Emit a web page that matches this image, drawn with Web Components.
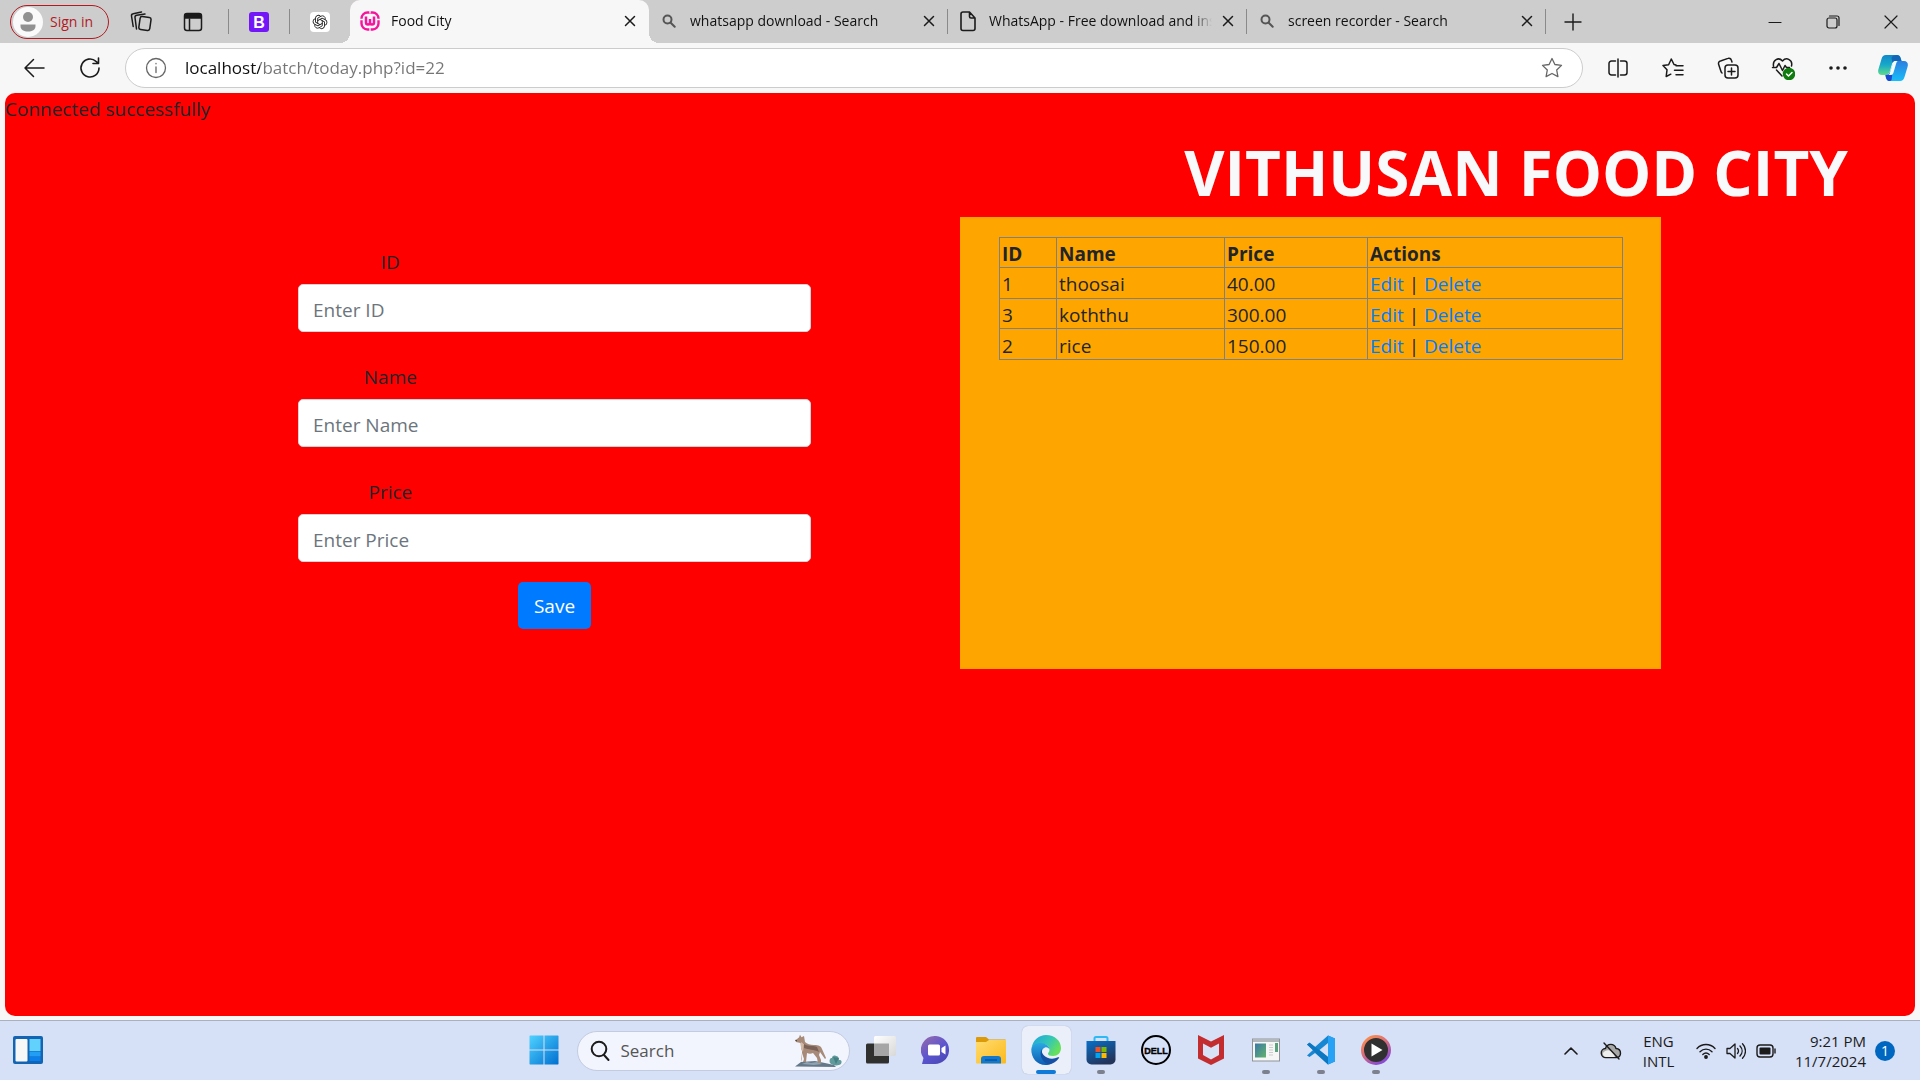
<!DOCTYPE html>
<html lang="en">
<head>
<meta charset="utf-8">
<title>Food City</title>
<style>
html,body{height:100%}
body{margin:0;display:flex;flex-direction:column;overflow:hidden;background:#f7f7f7;font-family:"Open Sans","Noto Sans",sans-serif;font-size:19px;line-height:30px;color:#212529}
food-page{flex:1;min-height:0}
</style>
</head>
<body>
<tab-strip>
  <browser-tab active icon="wamp" heading="Food City"></browser-tab>
  <browser-tab icon="glass" heading="whatsapp download - Search"></browser-tab>
  <browser-tab icon="file" heading="WhatsApp - Free download and install"></browser-tab>
  <browser-tab icon="glass" heading="screen recorder - Search"></browser-tab>
</tab-strip>
<nav-bar></nav-bar>
<food-page>
  <food-form slot="form">
    <form-field name="id" caption="ID"></form-field>
    <form-field name="name" caption="Name"></form-field>
    <form-field name="price" caption="Price"></form-field>
  </food-form>
  <food-table slot="list"></food-table>
</food-page>
<task-bar></task-bar>

<script>
const line = (w, h, box, body, sw = 1.5, color = '#1b1b1b') =>
  `<svg width="${w}" height="${h}" viewBox="${box}" fill="none" stroke="${color}" stroke-width="${sw}" stroke-linecap="round" stroke-linejoin="round" aria-hidden="true">${body}</svg>`;
const art = (w, h, box, body) => `<svg width="${w}" height="${h}" viewBox="${box}" aria-hidden="true">${body}</svg>`;

const ICONS = {
  person: art(30, 30, '0 0 30 30', '<circle cx="15" cy="15" r="15" fill="#fafafa"/><circle cx="15" cy="10" r="5" fill="#919191"/><path d="M7.500 17.500h15v1.500c0 4-3.500 5.500-7.500 5.500s-7.500-1.500-7.500-5.500z" fill="#919191"/>'),
  spaces: line(22, 22, '0 0 22 22', '<rect x="9.500" y="6" width="11" height="13" rx="2" transform="rotate(8 15 12)"/><path d="M6.500 18 5 6.500a2 2 0 0 1 1.700-2.200L15 3M3.200 15.500 1.500 5A2 2 0 0 1 3.200 2.800L11.500 1"/>'),
  panel: line(20, 20, '0 0 20 20', '<rect x="1.500" y="1.500" width="17" height="17" rx="2.500"/><path d="M6.500 7v11" /><path d="M2 2.500h16v3.500H2z" fill="#1b1b1b"/>'),
  bootstrap: art(20, 20, '0 0 20 20', '<rect width="20" height="20" rx="3" fill="#7317f8"/><text x="10" y="15.500" text-anchor="middle" font-family="Liberation Sans,sans-serif" font-weight="700" font-size="16" fill="#fff">B</text>'),
  knot: art(20, 20, '0 0 20 20', '<rect width="20" height="20" rx="4" fill="#fff"/><g fill="none" stroke="#222" stroke-width=".9" stroke-linejoin="round" stroke-linecap="round">' + [0,60,120,180,240,300].map(a => `<path transform="rotate(${a} 10 10)" d="M7.700 11.300V6.200L11 4.200a2.900 2.900 0 0 1 4.300 3"/>`).join('') + '</g>'),
  wamp: art(20, 20, '0 0 20 20', '<rect x="1.500" y="1.500" width="17" height="17" rx="6" fill="none" stroke="#f7149c" stroke-width="2.400"/><path d="M6 5.500v6a2 2 0 0 0 4 0V8v3.500a2 2 0 0 0 4 0v-6" fill="none" stroke="#f7149c" stroke-width="2.500"/><path d="M0 8.500h3M17 8.500h3M10 0v2.500M10 17v3" stroke="#f7f7f7" stroke-width="1.300"/>'),
  glass: line(14, 14, '0 0 14 14', '<circle cx="5.500" cy="5.500" r="4"/><path d="m8.700 8.700 4 4"/>', 2, '#555'),
  file: line(18, 22, '0 0 18 22', '<path d="M4 2h6.500L16 8v10.500a2 2 0 0 1-2 2H4a2 2 0 0 1-2-2V4a2 2 0 0 1 2-2zM10.500 2v4.500A1.500 1.500 0 0 0 12 8h4"/>', 1.6),
  close: line(12, 12, '0 0 12 12', '<path d="m1.500 1.500 9 9m0-9-9 9"/>', 1.5),
  plus: line(18, 18, '0 0 18 18', '<path d="M9 1v16M1 9h16"/>', 1.4),
  min: line(14, 14, '0 0 14 14', '<path d="M1 7.500h12"/>', 1.2),
  restore: line(14, 14, '0 0 14 14', '<rect x="1" y="3" width="10" height="10" rx="2"/><path d="M3.500 1H11a2 2 0 0 1 2 2v7.500"/>', 1.2),
  shut: line(14, 14, '0 0 14 14', '<path d="m1 1 12 12M13 1 1 13"/>', 1.2),
  back: line(22, 20, '0 0 22 20', '<path d="M21 10H2m8.500-8.500L2 10l8.500 8.500"/>'),
  reload: line(22, 22, '0 0 22 22', '<path d="M20 11a9 9 0 1 1-3-6.700L19 6M19.500 1v5.500H14"/>', 1.6),
  info: line(22, 22, '0 0 22 22', '<circle cx="11" cy="11" r="9.500"/><path d="M11 10v5.500M11 6.500v.3"/>', 1.3, '#666'),
  star: line(22, 22, '0 0 22 22', '<path d="m11 1.500 2.900 6 6.600.9-4.800 4.600 1.200 6.600L11 16.500l-5.900 3.100L6.300 13 1.500 8.400l6.600-.9z"/>', 1.3, '#666'),
  split: line(20, 20, '0 0 20 20', '<path d="M7.500 3h-4a2.500 2.500 0 0 0-2.500 2.500v9A2.500 2.500 0 0 0 3.500 17h4M12.500 3h4A2.500 2.500 0 0 1 19 5.500v9a2.500 2.500 0 0 1-2.500 2.500h-4M10 1v18"/>'),
  favs: line(22, 20, '0 0 22 20', '<path d="M14 7 12 6.500 9.300 1 6.600 6.700 1 7.600l4 4.200-.8 6.700 4.600-2.300M14 7.800h7M12.500 12.300H21M14 16.800h7"/>'),
  collect: line(22, 22, '0 0 22 22', '<rect x="8" y="8" width="13" height="13" rx="3"/><path d="M14.500 11v7M11 14.500h7M15 5l-.7-2A2.500 2.500 0 0 0 11 1.400L3.500 4A2.500 2.500 0 0 0 1.600 7.200L4 14.500a3 3 0 0 0 1 1.500"/>'),
  heart: line(24, 24, '0 0 24 24', '<path d="M2.500 10C1.500 4 7.500.5 11.500 5 15.500.5 22 4 20.500 10M5.500 14l5.500 6M1.500 11.500h4L8 7.500l3.500 7 2.500-5 1.500 2h3"/><circle cx="18" cy="18" r="5.500" fill="#107c10" stroke="#107c10"/><path d="m15.500 18 2 2 3.500-3.500" stroke="#fff"/>'),
  dots: art(20, 6, '0 0 20 6', '<g fill="#1b1b1b"><circle cx="3" cy="3" r="1.800"/><circle cx="10" cy="3" r="1.800"/><circle cx="17" cy="3" r="1.800"/></g>'),
  copilot: art(30, 28, '0 0 30 28', '<defs><linearGradient id="a" x2="0" y2="1"><stop stop-color="#1188c9"/><stop offset=".5" stop-color="#18a9c9"/><stop offset="1" stop-color="#5fdc8a"/></linearGradient><linearGradient id="b" x2="0" y2="1"><stop stop-color="#2c7ee0"/><stop offset="1" stop-color="#18bdf8"/></linearGradient></defs><path d="M8 1h11c3 0 3.500 2 4.500 6h-6c-2 0-3 1-3.500 3l-2 7c-.8 2.500-2 4-4.500 4H4c-3.500 0-4.500-3-3.500-6l3-10C4.200 2.500 5.500 1 8 1z" fill="url(#a)"/><path d="M19 1c2.500 0 3.500 2 4.500 6h-6c-2 0-2.500 1-3 2l-1-5c.5-2 2-3 5.500-3z" fill="#1267b8"/><path d="M22 27H12c-3 0-4-2-4.500-6 3 0 4-1 4.700-3.500L15 10c.8-2 1.500-3 4-3h7c3.500 0 4.500 3 3.500 6l-3 10c-.8 2.500-2 4-4.500 4z" fill="url(#b)"/><path d="M12 27c-3 0-4-2-4.500-6 3 0 4-1 4.700-3.500l2 4c-.6 2.500 0 5.500-2.200 5.500z" fill="#1a49d0"/><path d="m15 9-3 9.500c-.5 1.500-1 2.500-2 2.500h3c1.500 0 2-1 2.500-2.500L18 10c.4-1.500 1-3 2-3h-2c-2 0-2.400.6-3 2z" fill="#f2fbff"/>'),
  widgets: art(30, 28, '0 0 30 28', '<rect width="30" height="28" rx="2" fill="#1464b4"/><rect x="2.500" y="3" width="12" height="22.500" rx="1" fill="#f7f7f7"/><path d="M16.500 3h11v12h-11z" fill="#62d1fc"/><path d="M16.500 15.500h11v5h-11z" fill="#229ff5"/><path d="M16.500 21h11v4h-11z" fill="#0a80ee"/>'),
  start: art(30, 30, '0 0 30 30', '<defs><linearGradient id="s" x2="1" y2="1"><stop stop-color="#4fd2ff"/><stop offset="1" stop-color="#006fd0"/></linearGradient></defs><path d="M1 .5h13.500v14H.5V1zM15.500.5H29l.5.500v13.500h-14zM.5 15.500h14v14H1l-.5-.5zM15.500 15.500h14V29l-.5.500H15.500z" fill="url(#s)"/>'),
  find: line(20, 22, '0 0 20 22', '<circle cx="9" cy="9" r="7.300"/><path d="m14 15 4.500 5"/>', 2),
  wolf: art(50, 34, '0 0 50 34', '<path d="M2 32.500 8 28l14-1 10 2 9 2 2 2z" fill="#657889"/><path d="m9 30 5-2 4 1 6-1 5 2-8 1z" fill="#91a3b0"/><path d="M37 29c-1-3 0-5 2-5 0-2 2-3 4-2 2 0 3 2 3 4 3 0 3 2 2 4-2 2-9 2-11-1z" fill="#609a9a"/><path d="m40 23 3 7 3-6" fill="#437f83"/><path d="M2 6c2-.2 3-2 4-2.500L7 .8l1.500 2.400L11 2l1 6c2 2 5 3 9 3 5 0 7 1 8 4l4 9-1 1-5-7-1 3 2 5v3h-3l-1-5-4-5c-2 1-4 1-6 0l-1 9h-3l1-3-2-6-1 9H8l1-3V17c-1-2-1-5-1.500-8L3 8z" fill="#a78a78"/><path d="M10 9c3 4 10 2 14 4l2 5c-5-3-11-2-15-4z" fill="#7b6258"/><path d="m8 8 3 2-1 8-2-4z" fill="#d2b7a2"/><path d="M2 6.200 4 6l-.5 1.600z" fill="#443a36"/>'),
  tasks: art(30, 28, '0 0 30 28', '<defs><linearGradient id="t" x2="1" y2="1"><stop stop-color="#fff"/><stop offset="1" stop-color="#d8d8d8"/></linearGradient></defs><rect y="7.500" width="23" height="20" rx="1.500" fill="#30312f"/><rect x="8" width="22" height="20" rx="1.500" fill="url(#t)"/><path d="M8 7.500h15V20H8z" fill="#a5a6a5"/>'),
  chat: art(30, 30, '0 0 30 30', '<defs><linearGradient id="c" x2=".7" y2="1"><stop stop-color="#9a6ca9"/><stop offset=".6" stop-color="#5b55cf"/><stop offset="1" stop-color="#4d49b8"/></linearGradient></defs><path d="M15 1a14 14 0 1 1-2 28H1l1.500-6A14 14 0 0 1 15 1z" fill="url(#c)"/><rect x="7" y="9.500" width="12" height="11" rx="1.500" fill="#fff"/><path d="m20.500 13 4-2.500v9L20.500 17z" fill="#fff"/>'),
  folder: art(30, 28, '0 0 30 28', '<defs><linearGradient id="f" x2="1" y2="1"><stop stop-color="#ffdc70"/><stop offset="1" stop-color="#fcb91a"/></linearGradient></defs><path d="M0 2a1 1 0 0 1 1-1h9l3 2.500h16a1 1 0 0 1 1 1V8H0z" fill="#dc9a08"/><path d="M0 6h10l3-2h17v22.500a1 1 0 0 1-1 1H1a1 1 0 0 1-1-1z" fill="url(#f)"/><path d="M5 27.500V23a3 3 0 0 1 3-3h14a3 3 0 0 1 3 3v4.500z" fill="#1279cf"/><path d="M9 24h12" stroke="#074b94" stroke-width="1.200"/>'),
  edge: art(30, 30, '0 0 30 30', '<defs><linearGradient id="e" x2="1" y2=".5"><stop stop-color="#1ca4e2"/><stop offset=".6" stop-color="#35c7b5"/><stop offset="1" stop-color="#66e05b"/></linearGradient><linearGradient id="g" x2="0" y2="1"><stop stop-color="#2ba7e3"/><stop offset="1" stop-color="#0c5db4"/></linearGradient></defs><path d="M.5 13C2 5 8 0 15 0c9 0 15 6 15 13 0 5-3.500 8-8 8-3 0-5-1-5-2.300 0-1 1.500-1.500 1.500-4C18.500 11 15 9 11 9 6 9 2 11 .5 13z" fill="url(#e)"/><path d="M.3 14C1.500 10 5 8 9.500 8c5 0 9 3 9 6.500-1-2-3-2.500-4.500-2-4 1.500-4 7-1 11 2 3 5 4 8 4.500-2 1.500-4 2-6.500 2C6 30 0 23 .3 14z" fill="url(#g)"/><path d="M11 14c-3 4-1.500 12 6.500 15.500C22 29 26 26 28 23c.5-1 0-1-1-.7-5 2.500-11 1.500-14-1.800-2-2-2.500-4-2-6.500z" fill="#1450a3"/>'),
  store: art(30, 30, '0 0 30 30', '<defs><linearGradient id="st" x2=".5" y2="1"><stop stop-color="#0870c8"/><stop offset="1" stop-color="#23345b"/></linearGradient></defs><path d="M8.500 7V3.500a1.500 1.500 0 0 1 1.500-1.500h10a1.500 1.500 0 0 1 1.500 1.500V7" fill="none" stroke="#2eb9f4" stroke-width="2"/><path d="M.5 6h29v18.500a5 5 0 0 1-5 5h-19a5 5 0 0 1-5-5z" fill="url(#st)"/><path d="M9.500 12h5v5h-5z" fill="#f25022"/><path d="M15.500 12h5v5h-5z" fill="#7fba00"/><path d="M9.500 18h5v5h-5z" fill="#00a4ef"/><path d="M15.500 18h5v5h-5z" fill="#ffb900"/>'),
  dell: art(30, 30, '0 0 30 30', '<circle cx="15" cy="15" r="14" fill="none" stroke="#000" stroke-width="2"/><text x="15" y="18.500" text-anchor="middle" font-family="Liberation Sans,sans-serif" font-weight="700" font-size="9" fill="#000" stroke="#000" stroke-width=".4">DELL</text>'),
  mcafee: art(28, 30, '0 0 28 30', '<path d="M1 0l13 6.500L27 0v23.500L14 30 1 23.500z" fill="#c32d30"/><path d="m6 8.500 8 4.200 8-4.200V20l-8 4.500L6 20z" fill="#d8e2f7"/>'),
  gallery: art(28, 24, '0 0 28 24', '<defs><linearGradient id="y" x2="1" y2="1"><stop stop-color="#3b78a8"/><stop offset="1" stop-color="#62b36b"/></linearGradient></defs><rect x=".5" y="1" width="27" height="22" fill="#f6f6f6" stroke="#8f9499"/><path d="M1 1h26v3H1z" fill="#b3b8bd"/><path d="M3 5.500h11v14H3z" fill="url(#y)"/><path d="M17 7h4M17 9.500h4M17 12h4M17 14.500h4M17 17h4" stroke="#ccc"/><path d="M23 5h3v9h-3z" fill="#59a07d"/>'),
  code: art(30, 30, '0 0 30 30', '<path d="m22 .5 7 3v23l-7 3L9 18l-5.500 4L1 20.500l6-5.500-6-5.500L3.500 8 9 12zM22 8l-8.500 7L22 22z" fill="#1687d2" fill-rule="evenodd"/><path d="m22 .5 7 3v23l-7 3z" fill="#27a2f4"/><path d="m1 9.500 2.500-2L22 22v7.500z" fill="#0c78c1"/>'),
  player: art(30, 30, '0 0 30 30', '<defs><linearGradient id="p" x2=".6" y2="1"><stop stop-color="#ff9447"/><stop offset=".5" stop-color="#dc6d77"/><stop offset="1" stop-color="#8a4bd0"/></linearGradient></defs><circle cx="15" cy="15" r="13.500" fill="#303030" stroke="url(#p)" stroke-width="3"/><path d="M10.500 8.500v13l11-6.500z" fill="#fff"/>'),
  caret: line(14, 8, '0 0 14 8', '<path d="m1 7 6-6 6 6"/>', 1.6),
  cloud: line(22, 18, '0 0 22 18', '<path d="M6 15.500a4.500 4.500 0 0 1-.5-9C7 1 14.500 1 16 6.500c6 .5 6 9 0 9z" fill="#a8a8a8"/><path d="M3 11c3-4 9-4 12 4H6c-2 0-3.500-2-3-4z" fill="#eee" stroke="none"/><path d="m4 1 15 16"/>', 1.4),
  wifi: line(20, 16, '0 0 20 16', '<path d="M1 5.500C6 .2 14 .2 19 5.500M4 8.700c3.500-3.500 8.500-3.500 12 0M6.800 11.500c2-2 4.400-2 6.400 0"/><circle cx="10" cy="14" r="1.200" fill="#1b1b1b"/>', 1.4),
  sound: line(20, 18, '0 0 20 18', '<path d="M1 6.500h3L9 2v14l-5-4.500H1zM11.500 6.500c1.200 1.500 1.200 3.500 0 5M14 4c2.800 3 2.800 7 0 10M16.500 1.800c4 4.200 4 10.200 0 14.400"/>', 1.3),
  battery: line(20, 14, '0 0 20 14', '<rect x="1" y="1" width="16" height="12" rx="3"/><path d="M19 5v4"/><rect x="3.500" y="3.500" width="11" height="7" rx="1" fill="#1b1b1b" stroke="none"/>', 1.4)
};

const define = (name, html) => customElements.define(name, class extends HTMLElement {
  connectedCallback() {
    if (this.shadowRoot) return;
    const root = this.attachShadow({ mode: 'open' });
    root.innerHTML = typeof html === 'function' ? html(this) : html;
  }
});

const BOX = `*,:host{box-sizing:border-box}`;
const RESET = `${BOX}button{font:inherit;color:inherit;background:none;border:0;padding:0;margin:0;display:flex;align-items:center;justify-content:center;height:100%}`;

define('ui-icon', el => `<style>:host{display:inline-flex;align-items:center;justify-content:center;flex:none}svg{display:block}</style>${ICONS[el.getAttribute('name')]}`);

define('browser-tab', el => `<style>${RESET}
:host{display:block;position:relative;flex:0 1 299px;min-width:0;height:43px;font-size:14px;line-height:20px;color:#111}
:host([active]){background:#f7f7f7;border-radius:10px 10px 0 0}
:host([active])::before,:host([active])::after{content:"";position:absolute;bottom:0;width:10px;height:10px}
:host([active])::before{right:100%;background:radial-gradient(circle at 0 0,transparent 10px,#f7f7f7 10px)}
:host([active])::after{left:100%;background:radial-gradient(circle at 100% 0,transparent 10px,#f7f7f7 10px)}
.row{display:flex;align-items:center;height:100%;padding:0 9px 2px 10px}
:host(:not([active])) .row{background:linear-gradient(#8a8a8a,#8a8a8a) right 9px/1px 25px no-repeat}
.pick{flex:1;min-width:0;gap:11px;justify-content:flex-start}
.pick ui-icon{width:20px}
span{flex:1;overflow:hidden;white-space:nowrap;text-align:left;margin-right:6px;-webkit-mask:linear-gradient(90deg,#000 calc(100% - 20px),transparent);mask:linear-gradient(90deg,#000 calc(100% - 20px),transparent)}
.x{width:20px}
</style><div class="row"><button class="pick" role="tab"><ui-icon name="${el.getAttribute('icon')}"></ui-icon><span>${el.getAttribute('heading')}</span></button><button class="x" aria-label="Close tab"><ui-icon name="close"></ui-icon></button></div>`);

define('tab-strip', `<style>${RESET}
:host{display:flex;align-items:center;height:43px;flex:none;background:#cdcdcd;padding-left:10px;font-size:14px;line-height:20px}
.user{height:34px;width:99px;flex:none;border:1px solid #b3191f;border-radius:17px;color:#b3191f;gap:7px;justify-content:flex-start;padding-left:2px;margin-right:6px}
.tool{width:52px;flex:none}
.pins{display:flex;margin-left:9px;height:25px;flex:none}
.pins button{width:61px;border-left:1px solid #8a8a8a}
.tabs{display:flex;flex:1;min-width:0;height:43px}
.new{width:54px}
.win{width:58px;flex:none}
</style>
<button class="user"><ui-icon name="person"></ui-icon>Sign in</button>
<button class="tool" aria-label="Workspaces"><ui-icon name="spaces"></ui-icon></button>
<button class="tool" aria-label="Tab actions"><ui-icon name="panel"></ui-icon></button>
<div class="pins"><button aria-label="Bootstrap"><ui-icon name="bootstrap"></ui-icon></button><button aria-label="ChatGPT"><ui-icon name="knot"></ui-icon></button></div>
<div class="tabs" role="tablist"><slot></slot><button class="new" aria-label="New tab"><ui-icon name="plus"></ui-icon></button></div>
<button class="win" aria-label="Minimize"><ui-icon name="min"></ui-icon></button>
<button class="win" aria-label="Restore"><ui-icon name="restore"></ui-icon></button>
<button class="win" aria-label="Close"><ui-icon name="shut"></ui-icon></button>`);

define('nav-bar', `<style>${RESET}
:host{display:flex;align-items:center;height:50px;flex:none;background:#f7f7f7;padding-left:6px}
button{width:56px;flex:none}
.box{flex:1;display:flex;align-items:center;height:40px;margin:0 7px;padding:0 19px;border:1px solid #ccc;border-radius:20px;background:#fff}
.box button{width:22px}
input{flex:1;min-width:0;margin:0 18px;padding:0;border:0;outline:0;font:17px/24px "Open Sans","Noto Sans",sans-serif;-webkit-text-fill-color:transparent;background:linear-gradient(90deg,#111 75px,#757575 75px);-webkit-background-clip:text;background-clip:text}
.side{width:55px}
</style>
<button aria-label="Back"><ui-icon name="back"></ui-icon></button>
<button aria-label="Refresh"><ui-icon name="reload"></ui-icon></button>
<div class="box"><button aria-label="Site information"><ui-icon name="info"></ui-icon></button><input aria-label="Address" value="localhost/batch/today.php?id=22" spellcheck="false"><button aria-label="Add to favorites"><ui-icon name="star"></ui-icon></button></div>
<button class="side" aria-label="Split screen"><ui-icon name="split"></ui-icon></button>
<button class="side" aria-label="Favorites"><ui-icon name="favs"></ui-icon></button>
<button class="side" aria-label="Collections"><ui-icon name="collect"></ui-icon></button>
<button class="side" aria-label="Browser essentials"><ui-icon name="heart"></ui-icon></button>
<button class="side" aria-label="Settings"><ui-icon name="dots"></ui-icon></button>
<button class="side" aria-label="Copilot"><ui-icon name="copilot"></ui-icon></button>`);

define('food-page', `<style>${BOX}
:host{display:block;margin:0 5px 4px;background:red;border-radius:10px;overflow:hidden}
p{margin:0;padding-top:1px}
h1{margin:10px 0 7px;padding-right:67px;text-align:right;font-size:62px;line-height:76px;font-weight:700;color:#f8f9fa}
main{display:grid;grid-template-columns:1fr 1fr;align-items:start}
.form{padding:30px 149px 0 0;display:flex;justify-content:flex-end}
</style><p>Connected successfully</p><h1>VITHUSAN FOOD CITY</h1><main><div class="form"><slot name="form"></slot></div><slot name="list"></slot></main>`);

define('form-field', el => { const n = el.getAttribute('name'), c = el.getAttribute('caption'); return `<style>${BOX}
:host{display:block}
label{display:block;width:36%;margin-bottom:7px;text-align:center}
input{display:block;width:100%;height:48px;padding:4px 14px 0;border:1px solid #ced4da;border-radius:5px;background:#fff;font:inherit;color:#495057}
input::placeholder{color:#6c757d;opacity:1}
</style><label for="${n}">${c}</label><input id="${n}" name="${n}" placeholder="Enter ${c}">`; });

define('food-form', `<style>${BOX}
:host{display:block;flex:0 1 513px}
form{display:flex;flex-direction:column;align-items:center}
.fields{display:flex;flex-direction:column;gap:30px;width:100%}
button{height:47px;margin-top:20px;padding:0 16px;border:0;border-radius:5px;background:#007bff;color:#fff;font:inherit}
</style><form onsubmit="return false"><div class="fields"><slot></slot></div><button>Save</button></form>`);

define('food-table', () => { const rows = [['1', 'thoosai', '40.00'], ['3', 'koththu', '300.00'], ['2', 'rice', '150.00']]; return `<style>${BOX}
:host{display:block;width:73.4%;height:452px;background:orange;padding:20px 38px 20px 39px}
table{width:100%;height:123px;table-layout:fixed;border-collapse:collapse;line-height:26px}
th,td{border:1px solid #808080;padding:3px 1px 0 2px;text-align:left}
a{color:#007bff;text-decoration:none}
.i{width:57px}.n{width:168px}.p{width:143px}
</style><table><thead><tr><th class="i">ID</th><th class="n">Name</th><th class="p">Price</th><th>Actions</th></tr></thead><tbody>${rows.map(r => `<tr>${r.map(c => `<td>${c}</td>`).join('')}<td><a href="#edit">Edit</a> | <a href="#delete">Delete</a></td></tr>`).join('')}</tbody></table>`; });

define('task-app', el => `<style>${RESET}
:host{display:block;width:55px;height:100%}
button{position:relative;width:49px;height:48px;margin:5px 3px;border-radius:6px}
:host([current]) button{background:#ebeff9;box-shadow:0 0 1px #9aa4bd}
:host([current]) button::after,:host([running]) button::after{content:"";position:absolute;bottom:0;width:8px;height:4px;border-radius:2px;background:#7c818d}
:host([current]) button::after{width:20px;background:#0f7ad8}
</style><button aria-label="${el.getAttribute('name')}"><ui-icon name="${el.getAttribute('icon')}"></ui-icon></button>`);

define('task-bar', `<style>${RESET}
:host{display:grid;grid-template-columns:1fr auto 1fr;height:60px;flex:none;background:#d6e0f7;border-top:1px solid #a9b1c0;color:#1b1b1b;line-height:20px}
.apps,.tray{display:flex;align-items:center;height:100%}
.search{display:flex;align-items:center;width:273px;height:40px;margin:0 4px 0 5px;padding:0 6px 0 12px;border:1px solid #c2cbe0;border-radius:20px;background:#f2f5fd}
.search input{flex:1;min-width:0;margin-left:11px;padding:0;border:0;outline:0;background:none;font:17px/24px "Open Sans","Noto Sans",sans-serif}
.search input::placeholder{color:#555;opacity:1}
.tray{justify-content:flex-end;padding-right:25px;font-size:15px}
.tray button{width:40px}
.tray .lang{width:55px}
.status{display:flex;margin-left:5px;height:100%}
.tray .status button{width:30px}
.tray .clock{width:85px;text-align:right;justify-content:flex-end}
.tray .note{width:20px;height:20px;margin-left:9px;border-radius:10px;background:#0067c0;color:#fff;font-size:14px}
</style>
<div><task-app icon="widgets" name="Widgets"></task-app></div>
<div class="apps"><task-app icon="start" name="Start"></task-app>
<label class="search"><ui-icon name="find"></ui-icon><input placeholder="Search" aria-label="Search"><ui-icon name="wolf"></ui-icon></label>
<task-app icon="tasks" name="Task view"></task-app><task-app icon="chat" name="Chat"></task-app><task-app icon="folder" name="File Explorer"></task-app><task-app icon="edge" name="Edge" current></task-app><task-app icon="store" name="Store" running></task-app><task-app icon="dell" name="Dell"></task-app><task-app icon="mcafee" name="McAfee"></task-app><task-app icon="gallery" name="Gallery" running></task-app><task-app icon="code" name="Code" running></task-app><task-app icon="player" name="Media Player" running></task-app></div>
<div class="tray"><button aria-label="Hidden icons"><ui-icon name="caret"></ui-icon></button><button aria-label="OneDrive"><ui-icon name="cloud"></ui-icon></button><button class="lang">ENG<br>INTL</button><div class="status"><button aria-label="Network"><ui-icon name="wifi"></ui-icon></button><button aria-label="Volume"><ui-icon name="sound"></ui-icon></button><button aria-label="Battery"><ui-icon name="battery"></ui-icon></button></div><button class="clock">9:21 PM<br>11/7/2024</button><button class="note">1</button></div>`);
</script>
</body>
</html>
